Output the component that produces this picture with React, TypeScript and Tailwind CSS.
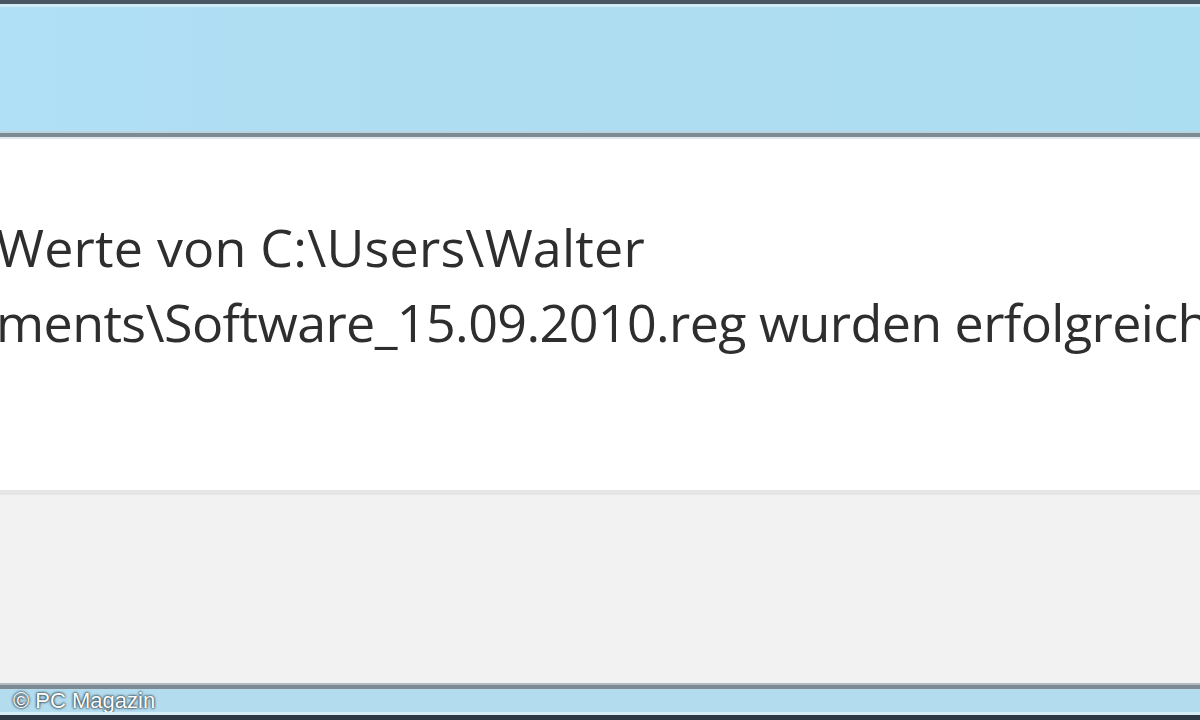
export default function App() {
  return (
    <div className="flex h-[720px] w-[1200px] flex-col overflow-hidden bg-white">
      <div className="h-[4px] shrink-0 bg-[#4a5762]" />
      <div className="h-[3px] shrink-0 bg-[#d2ecf7]" />
      <div className="h-[124px] shrink-0 bg-gradient-to-r from-[#b0e0f6] via-[#aedcf0] to-[#acdef2]" />
      <div className="h-[2px] shrink-0 bg-[#b9d3df]" />
      <div className="h-[4px] shrink-0 bg-[#7c8a93]" />
      <div className="h-[2px] shrink-0 bg-[#dfe7eb]" />
      <div className="h-[351px] shrink-0 overflow-hidden bg-white">
        <div className="ml-[-4px] mt-[70px] whitespace-nowrap font-['Open_Sans',sans-serif] text-[52px] leading-[75px] text-[#2e2e2e]">
          <div className="tracking-[0.2px]">Werte von C:\Users\Walter</div>
          <div className="tracking-[-0.6px]">ments\Software_15.09.2010.reg wurden erfolgreich</div>
        </div>
      </div>
      <div className="h-[5px] shrink-0 bg-[#e6e6e6]" />
      <div className="h-[188px] shrink-0 bg-[#f2f2f2]" />
      <div className="h-[2px] shrink-0 bg-[#b3bbc0]" />
      <div className="h-[4px] shrink-0 bg-[#7d8a93]" />
      <div className="flex h-[23px] shrink-0 items-center bg-[#b3dcee] pl-[13px]">
        <span className="font-['Liberation_Sans',sans-serif] text-[22px] leading-none text-white [text-shadow:0_0_2px_#1c2a33,0_0_3px_#1c2a33]">
          © PC Magazin
        </span>
      </div>
      <div className="h-[3px] shrink-0 bg-[#d8eef6]" />
      <div className="flex-1 bg-[#2c3843]" />
    </div>
  );
}
